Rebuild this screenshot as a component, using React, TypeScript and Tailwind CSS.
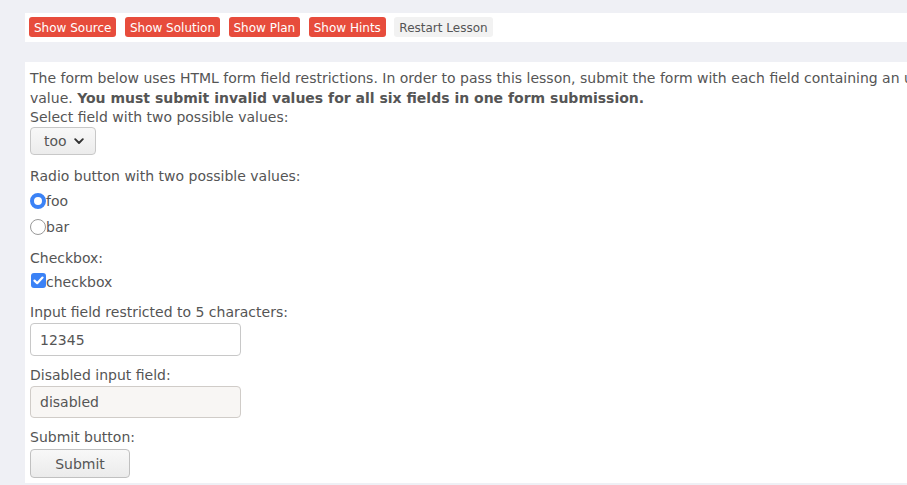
import React from "react";

export default function App() {
  const font = { fontFamily: '"DejaVu Sans", "Liberation Sans", sans-serif' };
  return (
    <div className="min-h-[485px] w-[907px] overflow-hidden bg-[#eff0f5] text-[#555555]" style={font}>
      <div className="pt-[13px] pl-[25px]">
        <div className="flex h-[29px] items-start gap-[8.5px] bg-white pl-[4px] pt-[4px] text-[12px] leading-[22px]">
          <span className="h-[20px] rounded-[3px] bg-[#e74c3c] px-[5px] text-white">Show Source</span>
          <span className="h-[20px] rounded-[3px] bg-[#e74c3c] px-[5px] text-white">Show Solution</span>
          <span className="h-[20px] rounded-[3px] bg-[#e74c3c] px-[5px] text-white">Show Plan</span>
          <span className="h-[20px] rounded-[3px] bg-[#e74c3c] px-[5px] text-white">Show Hints</span>
          <span className="h-[20px] rounded-[3px] bg-[#f2f2f2] px-[5px] text-[#555555]">Restart Lesson</span>
        </div>
      </div>
      <div className="ml-[25px] mt-[20px] h-[421px] bg-white pl-[5px] pt-[5px] text-[14px] leading-[20px]">
        <div className="w-[1000px] pt-[1px]">
          The form below uses HTML form field restrictions. In order to pass this lesson, submit the form with each field containing an u
          <br />
          value. <b>You must submit invalid values for all six fields in one form submission.</b>
        </div>
        <div className="mt-[-1px]">Select field with two possible values:</div>
        <div className="flex h-[28px] w-[66px] items-center gap-[7px] rounded-[4px] border border-[#c8c8c8] bg-gradient-to-b from-[#f8f8f8] to-[#ececec] pl-[13px]">
          <span>too</span>
          <svg width="10" height="7" viewBox="0 0 10 7" className="mt-[1px]">
            <path d="M1.2 1.2 L5 5 L8.8 1.2" stroke="#333" strokeWidth="1.9" fill="none" strokeLinecap="round" strokeLinejoin="round" />
          </svg>
        </div>
        <div className="mt-[11px]">Radio button with two possible values:</div>
        <div className="mt-[3px] flex h-[23px] items-center">
          <span className="box-border h-[16px] w-[16px] rounded-full border-[4px] border-[#3b82f6] bg-white" />
          <span>foo</span>
        </div>
        <div className="mt-[3px] flex h-[23px] items-center">
          <span className="box-border h-[16px] w-[16px] rounded-full border border-[#999999] bg-white" />
          <span>bar</span>
        </div>
        <div className="mt-[10px]">Checkbox:</div>
        <div className="mt-[2px] flex h-[23px] items-center">
          <span className="ml-[1px] mt-[-2px] flex h-[15px] w-[15px] items-center justify-center rounded-[3px] bg-[#3b82f6]">
            <svg width="11" height="9" viewBox="0 0 11 9">
              <path d="M1.5 4.6 L4.2 7.2 L9.5 1.6" stroke="white" strokeWidth="2.2" fill="none" strokeLinecap="round" strokeLinejoin="round" />
            </svg>
          </span>
          <span>checkbox</span>
        </div>
        <div className="mt-[9px]">Input field restricted to 5 characters:</div>
        <div className="mt-[1px] flex h-[33px] w-[211px] items-center rounded-[4px] border border-[#c8c8c8] bg-white pl-[9px]">12345</div>
        <div className="mt-[9px]">Disabled input field:</div>
        <div className="mt-[1px] flex h-[32px] w-[211px] items-center rounded-[4px] border border-[#d0ccc8] bg-[#f8f6f4] pl-[9px]">disabled</div>
        <div className="mt-[9px]">Submit button:</div>
        <div className="mt-[2px] flex h-[29px] w-[100px] items-center justify-center rounded-[4px] border border-[#c0c0c0] bg-gradient-to-b from-[#f8f8f8] to-[#ebebeb]">Submit</div>
      </div>
    </div>
  );
}
